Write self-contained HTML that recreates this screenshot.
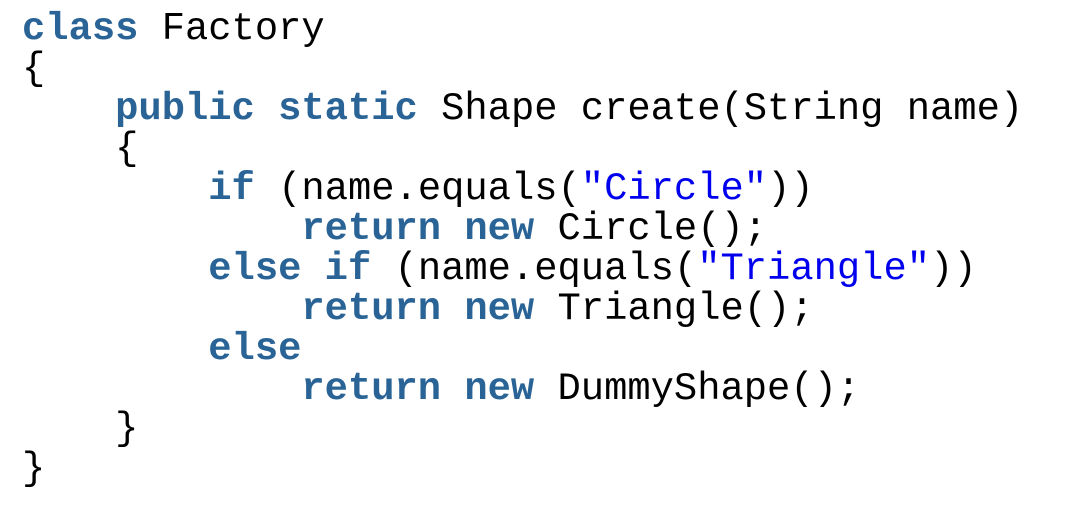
<!DOCTYPE html>
<html><head><style>
html,body{margin:0;background:#fff;width:1082px;height:510px;overflow:hidden}
pre{margin:0;position:absolute;left:22px;top:9px;font-family:"Liberation Mono",monospace;font-size:38.8px;line-height:40px;color:#000}
.k{color:#2a6496;font-weight:bold}
.s{color:#0000ee}
</style></head><body>
<pre><span class="k">class</span> Factory
{
    <span class="k">public static</span> Shape create(String name)
    {
        <span class="k">if</span> (name.equals(<span class="s">"Circle"</span>))
            <span class="k">return new</span> Circle();
        <span class="k">else if</span> (name.equals(<span class="s">"Triangle"</span>))
            <span class="k">return new</span> Triangle();
        <span class="k">else</span>
            <span class="k">return new</span> DummyShape();
    }
}</pre>
</body></html>
